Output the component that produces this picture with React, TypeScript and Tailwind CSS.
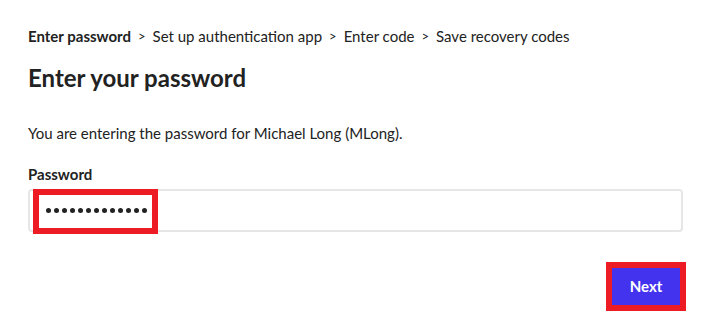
import React from "react";

const steps = ["Enter password", "Set up authentication app", "Enter code", "Save recovery codes"];

export default function App() {
  return (
    <div className="w-[709px] h-[324px] bg-white pl-[28px] pr-[26px] pt-[26px] text-[#222222] font-['Lato',sans-serif]">
      {/* Breadcrumb */}
      <nav className="flex items-center text-[15px] leading-5">
        {steps.map((s, i) => (
          <React.Fragment key={s}>
            {i > 0 && <span className="mx-[7px] text-[13px]">&gt;</span>}
            <span className={i === 0 ? "font-bold" : ""}>{s}</span>
          </React.Fragment>
        ))}
      </nav>

      <h1 className="mt-[16px] text-[24px] leading-8 font-bold">Enter your password</h1>

      <p className="mt-[29px] text-[15px] leading-5">
        You are entering the password for Michael Long (MLong).
      </p>

      <label className="block mt-[21px] text-[15px] leading-5 font-bold">Password</label>

      <div className="relative mt-[5px] h-[43px] rounded-[4px] border-2 border-[#e6e6e6] flex items-center pl-[16px]">
        <div className="flex gap-[3px]">
          {Array.from({ length: 13 }).map((_, i) => (
            <span key={i} className="w-[5px] h-[5px] rounded-full bg-[#222222]" />
          ))}
        </div>
        <div className="absolute left-[3px] top-[-2px] w-[125px] h-[45px] border-[6px] border-[#ed1c24]" />
      </div>

      <div className="flex justify-end mt-[30px] mr-[-3px]">
        <div className="border-[6px] border-[#ed1c24]">
          <button className="w-[68px] h-[37px] bg-[#4433ee] text-white text-[15px] font-bold">Next</button>
        </div>
      </div>
    </div>
  );
}
